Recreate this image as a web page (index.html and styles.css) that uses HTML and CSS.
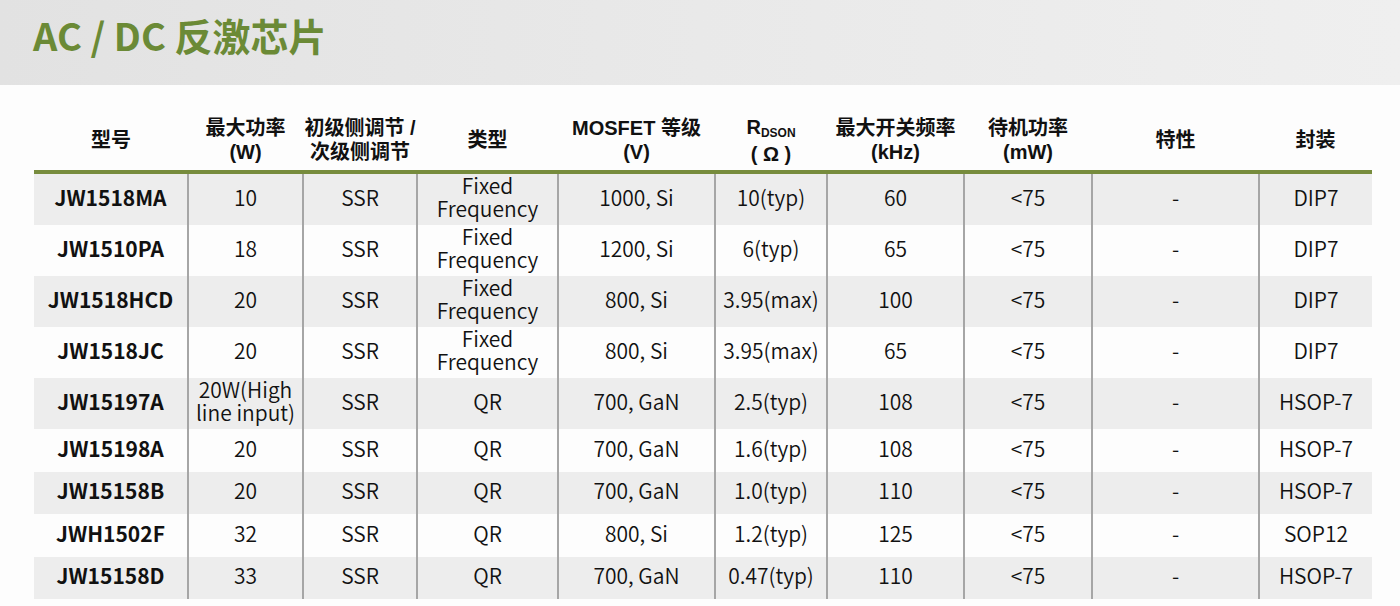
FILE: index.html
```html
<!DOCTYPE html>
<html lang="zh">
<head>
<meta charset="utf-8">
<link rel="stylesheet" href="styles.css">
</head>
<body>
<header class="band">
  <h1 class="title">AC / DC 反激芯片</h1>
</header>
<main class="wrap">
<table class="spec">
  <colgroup>
    <col class="c1"><col class="c2"><col class="c3"><col class="c4"><col class="c5">
    <col class="c6"><col class="c7"><col class="c8"><col class="c9"><col class="c10">
  </colgroup>
  <thead>
    <tr>
      <th>型号</th>
      <th>最大功率<br>(W)</th>
      <th>初级侧调节 /<br>次级侧调节</th>
      <th>类型</th>
      <th>MOSFET 等级<br>(V)</th>
      <th>R<sub>DSON</sub><br>( Ω )</th>
      <th>最大开关频率<br>(kHz)</th>
      <th>待机功率<br>(mW)</th>
      <th>特性</th>
      <th>封装</th>
    </tr>
  </thead>
  <tbody>
    <tr class="odd tall"><td>JW1518MA</td><td>10</td><td>SSR</td><td>Fixed<br>Frequency</td><td>1000, Si</td><td>10(typ)</td><td>60</td><td>&lt;75</td><td>-</td><td>DIP7</td></tr>
    <tr class="tall2"><td>JW1510PA</td><td>18</td><td>SSR</td><td>Fixed<br>Frequency</td><td>1200, Si</td><td>6(typ)</td><td>65</td><td>&lt;75</td><td>-</td><td>DIP7</td></tr>
    <tr class="odd tall"><td>JW1518HCD</td><td>20</td><td>SSR</td><td>Fixed<br>Frequency</td><td>800, Si</td><td>3.95(max)</td><td>100</td><td>&lt;75</td><td>-</td><td>DIP7</td></tr>
    <tr class="tall2"><td>JW1518JC</td><td>20</td><td>SSR</td><td>Fixed<br>Frequency</td><td>800, Si</td><td>3.95(max)</td><td>65</td><td>&lt;75</td><td>-</td><td>DIP7</td></tr>
    <tr class="odd tall"><td>JW15197A</td><td>20W(High<br>line input)</td><td>SSR</td><td>QR</td><td>700, GaN</td><td>2.5(typ)</td><td>108</td><td>&lt;75</td><td>-</td><td>HSOP-7</td></tr>
    <tr class="short"><td>JW15198A</td><td>20</td><td>SSR</td><td>QR</td><td>700, GaN</td><td>1.6(typ)</td><td>108</td><td>&lt;75</td><td>-</td><td>HSOP-7</td></tr>
    <tr class="odd short2"><td>JW15158B</td><td>20</td><td>SSR</td><td>QR</td><td>700, GaN</td><td>1.0(typ)</td><td>110</td><td>&lt;75</td><td>-</td><td>HSOP-7</td></tr>
    <tr class="short"><td>JWH1502F</td><td>32</td><td>SSR</td><td>QR</td><td>800, Si</td><td>1.2(typ)</td><td>125</td><td>&lt;75</td><td>-</td><td>SOP12</td></tr>
    <tr class="odd short2"><td>JW15158D</td><td>33</td><td>SSR</td><td>QR</td><td>700, GaN</td><td>0.47(typ)</td><td>110</td><td>&lt;75</td><td>-</td><td>HSOP-7</td></tr>
  </tbody>
</table>
</main>
</body>
</html>
```

FILE: styles.css
```css
html, body {
  margin: 0;
  padding: 0;
  background: #fdfdfd;
}
body {
  font-family: "Noto Sans CJK SC", "Noto Sans", sans-serif;
  color: #1e1e1e;
}
.band {
  height: 85px;
  box-sizing: border-box;
  background: linear-gradient(90deg, #e2e2e2 0%, #e9e9e9 50%, #efefef 100%);
  display: flex;
  align-items: flex-start;
  padding: 16px 0 0 33px;
}
.title {
  margin: 0;
  font-size: 38px;
  font-weight: 700;
  color: #6b8a36;
  line-height: 38px;
}
.wrap {
  padding: 25px 0 0 34px;
}
.spec {
  border-collapse: collapse;
  table-layout: fixed;
  width: 1338px;
}
.c1 { width: 154px; }
.c2 { width: 115px; }
.c3 { width: 114px; }
.c4 { width: 141px; }
.c5 { width: 157px; }
.c6 { width: 112px; }
.c7 { width: 137px; }
.c8 { width: 128px; }
.c9 { width: 167px; }
.c10 { width: 113px; }
.spec th {
  height: 60px;
  padding: 0;
  font-family: "Liberation Sans", "Noto Sans CJK SC", sans-serif;
  font-size: 20px;
  font-weight: 700;
  line-height: 24px;
  text-align: center;
  vertical-align: middle;
  border-bottom: 4px solid #778c3d;
  white-space: nowrap;
  color: #111;
}
.spec th sub {
  font-size: 12px;
  vertical-align: baseline;
  position: relative;
  top: 3px;
}
.spec td {
  padding: 0 0 5px;
  font-size: 21px;
  font-weight: 350;
  line-height: 23px;
  text-align: center;
  vertical-align: middle;
  border-left: 2px solid #a6a6a6;
  white-space: nowrap;
  color: #111;
}
.spec td:first-child {
  border-left: none;
  font-size: 21px;
  font-weight: 700;
  color: #111;
}
.odd td { background: #ededed; }
.tall { height: 51px; }
.tall2 { height: 50px; }
.short { height: 43px; }
.short2 { height: 42px; }
```
